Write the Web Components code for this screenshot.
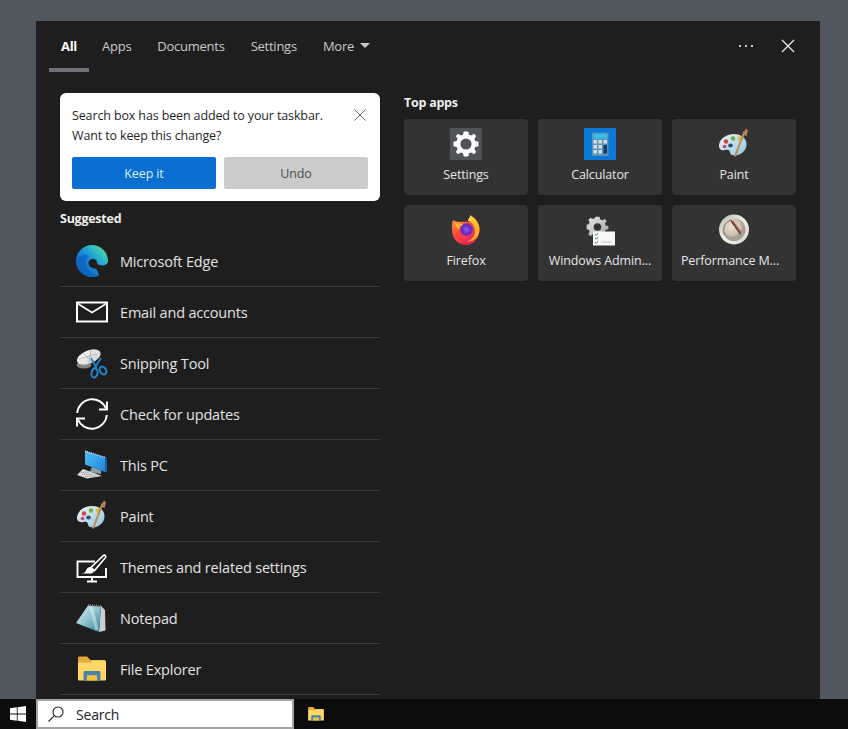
<!DOCTYPE html>
<html lang="en">
<head>
<meta charset="utf-8">
<title>Search</title>
<style>
  html, body { margin: 0; height: 100%; }
  body { background: #50575f; font-family: "Open Sans", "Liberation Sans", sans-serif; overflow: hidden; }
</style>
</head>
<body>
<search-shell>
  <tab-bar slot="tabs"></tab-bar>
  <notice-card slot="left">
    <span slot="message">Search box has been added to your taskbar.<br>Want to keep this change?</span>
  </notice-card>
  <section-title slot="left">Suggested</section-title>
  <suggest-row slot="left" icon="edge">Microsoft Edge</suggest-row>
  <suggest-row slot="left" icon="mail">Email and accounts</suggest-row>
  <suggest-row slot="left" icon="snip">Snipping Tool</suggest-row>
  <suggest-row slot="left" icon="sync">Check for updates</suggest-row>
  <suggest-row slot="left" icon="pc">This PC</suggest-row>
  <suggest-row slot="left" icon="paint">Paint</suggest-row>
  <suggest-row slot="left" icon="themes">Themes and related settings</suggest-row>
  <suggest-row slot="left" icon="notepad">Notepad</suggest-row>
  <suggest-row slot="left" icon="folder">File Explorer</suggest-row>
  <section-title slot="right" class="top">Top apps</section-title>
  <tile-grid slot="right">
    <app-tile icon="settings">Settings</app-tile>
    <app-tile icon="calc">Calculator</app-tile>
    <app-tile icon="paint">Paint</app-tile>
    <app-tile icon="firefox">Firefox</app-tile>
    <app-tile icon="admin">Windows Admin...</app-tile>
    <app-tile icon="perf" class="clipped">Performance M...</app-tile>
  </tile-grid>
</search-shell>
<task-bar></task-bar>

<script>
// ── Icons ─────────────────────────────────────────────────────────
// All drawn on a 32x32 box, ids are unique per icon so a shadow root
// can hold one copy each.
const ICONS = {
  edge: `<defs>
      <linearGradient id="eg1" x1="0" y1="1" x2="1" y2="0"><stop offset="0" stop-color="#0b52a6"/><stop offset=".5" stop-color="#1b8bdb"/><stop offset=".72" stop-color="#2fc0c4"/><stop offset="1" stop-color="#78e266"/></linearGradient>
    </defs>
    <circle cx="16" cy="16" r="16" fill="url(#eg1)"/>
    <path d="M12.500 18C12.500 14.500 17 12.500 20 15 21.500 16.500 20.500 19 23 20 26 21 30 20.500 32.500 17L32.500 32H23.500C22.500 28 21 25 20 24 17 23 12.500 22 12.500 18Z" fill="#1e1e1e"/>
    <path d="M0 16C1.500 11 7 8.500 13 11 9.500 14 8.500 19 11 23 13 27 18 30 23.500 30.500 21.500 31.500 18.500 32 16 32 7 32 0 25 0 16Z" fill="#0d62bd" opacity=".75"/>`,
  mail: `<rect x="1" y="6.500" width="30" height="19" fill="none" stroke="#fff" stroke-width="2"/>
    <path d="M1.500 7.500 16 16.500 30.500 7.500" fill="none" stroke="#fff" stroke-width="1.600"/>`,
  snip: `<defs><linearGradient id="sn1" x1="0" y1="0" x2="1" y2="1"><stop offset="0" stop-color="#fafafa"/><stop offset="1" stop-color="#cfcfcf"/></linearGradient></defs>
    <ellipse cx="8" cy="18" rx="7.500" ry="3.500" fill="#858585"/>
    <ellipse cx="12.800" cy="10" rx="12.500" ry="6.500" fill="url(#sn1)" transform="rotate(-22 12.800 10)"/>
    <path d="M7 6 17 16M15 3 13 16M3 12 21 7" stroke="#a8a8a8" stroke-width=".7" fill="none"/>
    <path d="M15 11 20.500 21M25 11 18.500 21" stroke="#1f86d0" stroke-width="1.800" fill="none"/>
    <ellipse cx="18.500" cy="26" rx="3" ry="4.500" fill="none" stroke="#1f86d0" stroke-width="2" transform="rotate(10 18.500 26)"/>
    <ellipse cx="27" cy="23.500" rx="3" ry="4.200" fill="none" stroke="#1f86d0" stroke-width="2" transform="rotate(-30 27 23.500)"/>`,
  sync: `<path d="M1.200 15A15 15 0 0 1 30 10.500" fill="none" stroke="#fff" stroke-width="1.900"/>
    <path d="M31 3.500V11.500H23" fill="none" stroke="#fff" stroke-width="1.900"/>
    <path d="M30.800 17A15 15 0 0 1 2 21.500" fill="none" stroke="#fff" stroke-width="1.900"/>
    <path d="M1 28.500V20.500H9" fill="none" stroke="#fff" stroke-width="1.900"/>`,
  pc: `<defs><linearGradient id="pc1" x1="0" y1="0" x2="1" y2="1"><stop offset="0" stop-color="#56bdf4"/><stop offset="1" stop-color="#1985dc"/></linearGradient></defs>
    <path d="M9 2 29 8.500V23L9 15.500Z" fill="url(#pc1)"/>
    <path d="M9 2 29.500 8.500" stroke="#e6edf2" stroke-width="1.200" stroke-dasharray="1.200 .8" fill="none"/>
    <path d="M29 8.500 31 9V23.500L29 23Z" fill="#155f9f"/>
    <path d="M16 18 25 21.500V25L14 23Z" fill="#8ea0ad"/>
    <path d="M7 20 14 22.500 26 27 11 29.500 1 26Z" fill="#dcdcdc"/>
    <path d="M5 23.500 13 23M6 25.500 17 25M9 27.500 21 27" stroke="#8c8c8c" stroke-width=".9" stroke-dasharray="1.200 .7"/>`,
  paint: `<defs><linearGradient id="pa1" x1="0" y1="0" x2="1" y2="1"><stop offset="0" stop-color="#f4f6f7"/><stop offset="1" stop-color="#8fc3e0"/></linearGradient></defs>
    <path d="M1 17C2 10 9 6 16 6C24 6 29 11 28.500 17C28 24 20 29 14 27C12.500 26.500 12 24.500 11.500 23C11 21.500 9 21.500 7 22C3.500 23 .5 21 1 17Z" fill="url(#pa1)"/>
    <circle cx="8" cy="13.500" r="2.300" fill="#c94d41"/><circle cx="15" cy="10.500" r="2.300" fill="#6eb04d"/>
    <circle cx="22" cy="10.500" r="2.300" fill="#e5b93a"/><circle cx="6.500" cy="18.500" r="1.800" fill="#b64a72"/>
    <ellipse cx="12.500" cy="17.500" rx="2.300" ry="2" fill="#2b4f70"/>
    <path d="M26.500 3.500 17 28.500" stroke="#b98f55" stroke-width="2.100"/>
    <path d="M24.500 6.500 28 0.500 30 2.500 28.500 8Z" fill="#b9805a"/>`,
  themes: `<path d="M19 10.500H1.500V26H30V17M11 30.500H21M16 26V30.500" fill="none" stroke="#fff" stroke-width="1.900"/>
    <path d="M27.500 4.500C29 3.500 30.500 5 29.500 6.500L18.500 19.500 15 16.500Z" fill="none" stroke="#fff" stroke-width="1.600"/>
    <path d="M14 16C10.500 16.500 10.500 19 9.500 20.500 9 21.500 7 22.500 5 22.500H14C16.500 22.500 18.500 21 17.500 19Z" fill="#fff"/>`,
  notepad: `<defs><linearGradient id="np1" x1="0" y1="0" x2="1" y2="1"><stop offset="0" stop-color="#e4f2f4"/><stop offset=".5" stop-color="#8cc3cf"/><stop offset="1" stop-color="#2f7f92"/></linearGradient></defs>
    <path d="M25 4 29 8 29.500 28.500 23 30Z" fill="#c9ced1"/>
    <path d="M12 3.500 25 4.500 23 30 0 21Z" fill="url(#np1)"/>
    <path d="M12 3 25.500 4" stroke="#7d8185" stroke-width="2" stroke-dasharray="1 1"/>
    <path d="M15 5 21 28" stroke="#eef6f7" stroke-width="3.500" opacity=".45"/>`,
  folder: `<path d="M2 5C2 4 2.500 3.500 3.500 3.500H11L14.500 7H29V11H2Z" fill="#e5a83a"/>
    <path d="M2 9.500H14.500L16.500 7.500H28.500C29.500 7.500 30 8 30 9V26C30 27 29.500 27.500 28.500 27.500H3C2.500 27.500 2 27 2 26Z" fill="#ffd766"/>
    <path d="M7.500 27.500V19.500C7.500 18.500 8 18 9 18H23C24 18 24.500 18.500 24.500 19.500V27.500H21V22.500H11V27.500Z" fill="#4a84a8"/>
    <rect x="11" y="22.500" width="10" height="5" fill="#f5c23e"/>`,
  settings: `<rect width="32" height="32" fill="#505459"/>
    <g transform="translate(16 16)" fill="#fff">
      <path fill-rule="evenodd" d="M-2.300-12.500H2.300L3-9.300 5.200-8.400 8-10.200 10.200-8 8.400-5.200 9.300-3 12.500-2.300V2.300L9.300 3 8.400 5.200 10.200 8 8 10.200 5.200 8.400 3 9.300 2.300 12.500H-2.300L-3 9.300-5.200 8.400-8 10.200-10.200 8-8.400 5.200-9.300 3-12.500 2.300V-2.300L-9.300-3-8.400-5.200-10.200-8-8-10.200-5.200-8.400-3-9.300ZM0-5.600A5.600 5.600 0 1 0 0 5.600 5.600 5.600 0 1 0 0-5.600Z"/>
    </g>`,
  calc: `<rect width="32" height="32" fill="#0a78d4"/>
    <rect x="8" y="4.500" width="16.500" height="23.500" fill="#5f93ba"/>
    <rect x="9.500" y="6" width="13.500" height="4.500" fill="#35c0ee"/>
    <g fill="#d8dfe4"><rect x="9.500" y="12" width="3.500" height="3.500"/><rect x="14.500" y="12" width="3.500" height="3.500"/><rect x="19.500" y="12" width="3.500" height="3.500"/>
    <rect x="9.500" y="17" width="3.500" height="3.500"/><rect x="14.500" y="17" width="3.500" height="3.500"/>
    <rect x="9.500" y="22" width="3.500" height="3.500"/><rect x="14.500" y="22" width="3.500" height="3.500"/></g>
    <rect x="19.500" y="17" width="3.500" height="8.500" fill="#113a66"/>`,
  firefox: `<defs>
      <linearGradient id="ff1" x1=".1" y1="0" x2=".7" y2="1"><stop offset="0" stop-color="#ff9a30"/><stop offset=".5" stop-color="#ff4b3a"/><stop offset="1" stop-color="#e3195f"/></linearGradient>
      <linearGradient id="ff2" x1="0" y1="0" x2="1" y2="1"><stop offset="0" stop-color="#ffe24a"/><stop offset="1" stop-color="#ff9a20"/></linearGradient>
      <radialGradient id="ff3"><stop offset="0" stop-color="#8a5cf0"/><stop offset=".7" stop-color="#6a2bc0"/><stop offset="1" stop-color="#8d2ba0"/></radialGradient>
    </defs>
    <path d="M3 6C1.800 8.500 2 12.500 2 16 2 24.500 8 31 16 31S29.500 24 29.500 15.500C29.500 11 27 6 23 3L19.500 8C13 7 8 9 3 6Z" fill="url(#ff1)"/>
    <path d="M20 1C20.500 3.500 18 4.500 18 7 21.500 7.500 25 11 25 17 25 22 22 26 17 27.500 24 28 29.500 23 29.500 15.500 29.500 9 25 4 20 1Z" fill="url(#ff2)"/>
    <circle cx="16.500" cy="15.500" r="6.500" fill="url(#ff3)"/>
    <path d="M5 8C7 10 10.500 8.500 13 10.500L9 13 10.500 15C8 15.500 5 13 5 8Z" fill="#ffb63e"/>`,
  admin: `<defs><linearGradient id="ad1" x1="0" y1="0" x2="1" y2="1"><stop offset="0" stop-color="#e8e8e8"/><stop offset="1" stop-color="#a0a0a0"/></linearGradient></defs>
    <g transform="translate(13.500 13) scale(1.080)"><path fill="url(#ad1)" fill-rule="evenodd" d="M-2-9.500H2L2.500-7 4.500-6.300 6.800-7.500 8.500-5.500 7-3.500 7.500-1.500 10-1V2L7.500 2.500 7 4.500 8.500 6.500 6.500 8.500 4.500 7 2.500 7.700 2 9.500H-2L-2.500 7.500-4.500 6.800-6.500 8.500-8.500 6.500-7.300 4.500-8 2.500-10 2V-2L-8-2.500-7.300-4.500-8.500-6.500-6.500-8.500-4.500-7.300-2.500-8ZM0-3.500A3.500 3.500 0 1 0 0 3.500 3.500 3.500 0 1 0 0-3.500Z"/></g>
    <rect x="9" y="17.500" width="22" height="14" fill="#f7f7f7"/>
    <path d="M11 20 12.300 21.300 14 19M11 24 12.300 25.300 14 23M11 28 12.300 29.300 14 27" fill="none" stroke="#4f8f9a" stroke-width="1"/>
    <path d="M18 28H28" stroke="#c4c4c4"/>`,
  perf: `<defs><radialGradient id="pf1" cx=".4" cy=".35"><stop offset="0" stop-color="#ece2d4"/><stop offset=".8" stop-color="#cdbfb0"/><stop offset="1" stop-color="#a89f93"/></radialGradient>
      <linearGradient id="pf2" x1="0" y1="0" x2="1" y2="1"><stop offset="0" stop-color="#b5b5ac"/><stop offset=".5" stop-color="#f2f2ec"/><stop offset="1" stop-color="#d5d5ce"/></linearGradient></defs>
    <circle cx="16" cy="15.500" r="15" fill="url(#pf2)"/>
    <circle cx="16" cy="15.500" r="11.500" fill="url(#pf1)"/>
    <path d="M13 6.500 22.500 20" stroke="#5b3a3a" stroke-width="1.500"/><path d="M15 7 23 18" stroke="#b84040" stroke-width="1"/>
    <path d="M7 21A10.500 10.500 0 0 1 13 6" fill="none" stroke="#7f766c" stroke-width="1"/>
    <path d="M17 6A10 10 0 0 1 25 19" fill="none" stroke="#b98a80" stroke-width="1" stroke-dasharray="1 1.500"/>`,
};

function icon(name, size) {
  return `<svg width="${size}" height="${size}" viewBox="0 0 32 32" aria-hidden="true">${ICONS[name] ?? ""}</svg>`;
}

// ── Shell ─────────────────────────────────────────────────────────
class SearchShell extends HTMLElement {
  constructor() {
    super();
    this.attachShadow({ mode: "open" }).innerHTML = `
      <style>
        :host { display: block; width: 784px; height: 678px; margin: 21px 0 0 36px; background: #1e1e1e; color: #fff; overflow: hidden; }
        .body { display: flex; gap: 24px; padding: 21px 24px 0; }
        .left { width: 320px; flex: none; }
        .right { width: 392px; flex: none; }
      </style>
      <slot name="tabs"></slot>
      <div class="body">
        <div class="left"><slot name="left"></slot></div>
        <div class="right"><slot name="right"></slot></div>
      </div>
    `;
  }
}
customElements.define("search-shell", SearchShell);

// ── Tab Bar ───────────────────────────────────────────────────────
class TabBar extends HTMLElement {
  constructor() {
    super();
    this.attachShadow({ mode: "open" }).innerHTML = `
      <style>
        :host { display: flex; align-items: flex-start; height: 51px; padding: 0 25px 0 13px; font-size: 13px; letter-spacing: -.25px; color: #c9c9c9; }
        .tab { display: flex; align-items: center; padding: 2px 13px 0; height: 45px; border-bottom: 4px solid transparent; }
        .tab.on { color: #fff; font-weight: 700; padding: 2px 12px 0; border-bottom-color: #6e7178; width: 16px; justify-content: center; }
        .caret { width: 0; height: 0; margin: 0 0 0 6px; border: 5.500px solid transparent; border-top: 5.500px solid #c9c9c9; border-bottom: 0; }
        .tools { margin-left: auto; display: flex; align-items: center; height: 49px; gap: 28px; }
        .dots { display: flex; gap: 4px; }
        .dots i { width: 2px; height: 2px; background: #c9c9c9; }
      </style>
      <div class="tab on">All</div>
      <div class="tab">Apps</div>
      <div class="tab">Documents</div>
      <div class="tab">Settings</div>
      <div class="tab">More<span class="caret"></span></div>
      <div class="tools">
        <div class="dots"><i></i><i></i><i></i></div>
        <svg width="14" height="14" viewBox="0 0 14 14"><path d="M1 1 13 13M13 1 1 13" stroke="#e4e4e4" stroke-width="1.400" fill="none"/></svg>
      </div>
    `;
  }
}
customElements.define("tab-bar", TabBar);

// ── Notice Card ───────────────────────────────────────────────────
class NoticeCard extends HTMLElement {
  constructor() {
    super();
    this.attachShadow({ mode: "open" }).innerHTML = `
      <style>
        :host { display: block; box-sizing: border-box; height: 108px; padding: 13px 12px 0; background: #fff; border-radius: 6px; color: #1f1f1f; font-size: 12.500px; letter-spacing: -.13px; position: relative; }
        .msg { line-height: 20px; height: 40px; }
        .close { position: absolute; top: 16px; right: 14px; width: 12px; height: 12px; }
        .btns { display: grid; grid-template-columns: 144px 144px; gap: 8px; margin-top: 11px; }
        button { all: unset; box-sizing: border-box; height: 32px; border-radius: 2px; text-align: center; line-height: 32px; font: inherit; letter-spacing: inherit; }
        .keep { background: #0a6fd0; color: #dcecf9; }
        .undo { background: #cbcbcb; color: #4a4a4a; }
      </style>
      <div class="msg"><slot name="message"></slot></div>
      <svg class="close" viewBox="0 0 12 12"><path d="M.5.500 11.500 11.500M11.500.500 .5 11.500" stroke="#666" fill="none"/></svg>
      <div class="btns"><button class="keep">Keep it</button><button class="undo">Undo</button></div>
    `;
  }
}
customElements.define("notice-card", NoticeCard);

// ── Section Title ─────────────────────────────────────────────────
class SectionTitle extends HTMLElement {
  constructor() {
    super();
    this.attachShadow({ mode: "open" }).innerHTML = `
      <style>
        :host { display: block; height: 35px; line-height: 36px; font-size: 12.500px; font-weight: 700; letter-spacing: -.25px; color: #eee; }
        :host(.top) { height: 26px; line-height: 20px; }
      </style>
      <slot></slot>
    `;
  }
}
customElements.define("section-title", SectionTitle);

// ── Suggest Row ───────────────────────────────────────────────────
class SuggestRow extends HTMLElement {
  constructor() {
    super();
    this.attachShadow({ mode: "open" }).innerHTML = `
      <style>
        :host { display: flex; align-items: center; box-sizing: border-box; height: 51px; padding-left: 16px; gap: 12px; border-bottom: 1px solid #3a3a3a; font-size: 14.500px; letter-spacing: -.18px; color: #e2e2e2; }
        svg { flex: none; display: block; }
      </style>
      ${icon(this.getAttribute("icon"), 32)}
      <span><slot></slot></span>
    `;
  }
}
customElements.define("suggest-row", SuggestRow);

// ── Tile Grid + App Tile ──────────────────────────────────────────
class TileGrid extends HTMLElement {
  constructor() {
    super();
    this.attachShadow({ mode: "open" }).innerHTML = `
      <style>:host { display: grid; grid-template-columns: repeat(3, 124px); grid-auto-rows: 76px; gap: 10px; }</style>
      <slot></slot>
    `;
  }
}
customElements.define("tile-grid", TileGrid);

class AppTile extends HTMLElement {
  constructor() {
    super();
    this.attachShadow({ mode: "open" }).innerHTML = `
      <style>
        :host { display: flex; flex-direction: column; align-items: center; padding-top: 9px; box-sizing: border-box; background: #333333; border-radius: 4px; font-size: 12.500px; letter-spacing: -.12px; color: #e6e6e6; white-space: nowrap; }
        svg { display: block; }
        span { margin-top: 6px; line-height: 17px; }
        /* truncated label sits left of centre in the original */
        :host(.clipped) span { margin-right: 8px; }
      </style>
      ${icon(this.getAttribute("icon"), 32)}
      <span><slot></slot></span>
    `;
  }
}
customElements.define("app-tile", AppTile);

// ── Task Bar ──────────────────────────────────────────────────────
class TaskBar extends HTMLElement {
  constructor() {
    super();
    this.attachShadow({ mode: "open" }).innerHTML = `
      <style>
        :host { display: flex; align-items: stretch; height: 30px; background: #0c0c0c; }
        .start { width: 36px; flex: none; display: flex; align-items: center; padding-left: 10px; box-sizing: border-box; }
        .box { box-sizing: border-box; width: 258px; background: #fff; border: 2px solid #a3a3a3; display: flex; align-items: center; padding-left: 10px; gap: 12px; font-size: 14px; letter-spacing: -.2px; color: #222; }
        .pin { margin-left: 13px; display: flex; align-items: center; }
      </style>
      <div class="start">
        <svg width="16" height="16" viewBox="0 0 16 16" fill="#fff"><path d="M0 2.300 6.800 1.300V7.500H0ZM7.600 1.200 16 0V7.500H7.600ZM0 8.400H6.800V14.700L0 13.700ZM7.600 8.400H16V16L7.600 14.800Z"/></svg>
      </div>
      <div class="box">
        <svg width="16" height="16" viewBox="0 0 16 16" fill="none" stroke="#222" stroke-width="1.100"><circle cx="10" cy="6" r="5"/><path d="M6.300 9.700 .5 15.500"/></svg>
        <span>Search</span>
      </div>
      <div class="pin">${icon("folder", 18)}</div>
    `;
  }
}
customElements.define("task-bar", TaskBar);
</script>
</body>
</html>
